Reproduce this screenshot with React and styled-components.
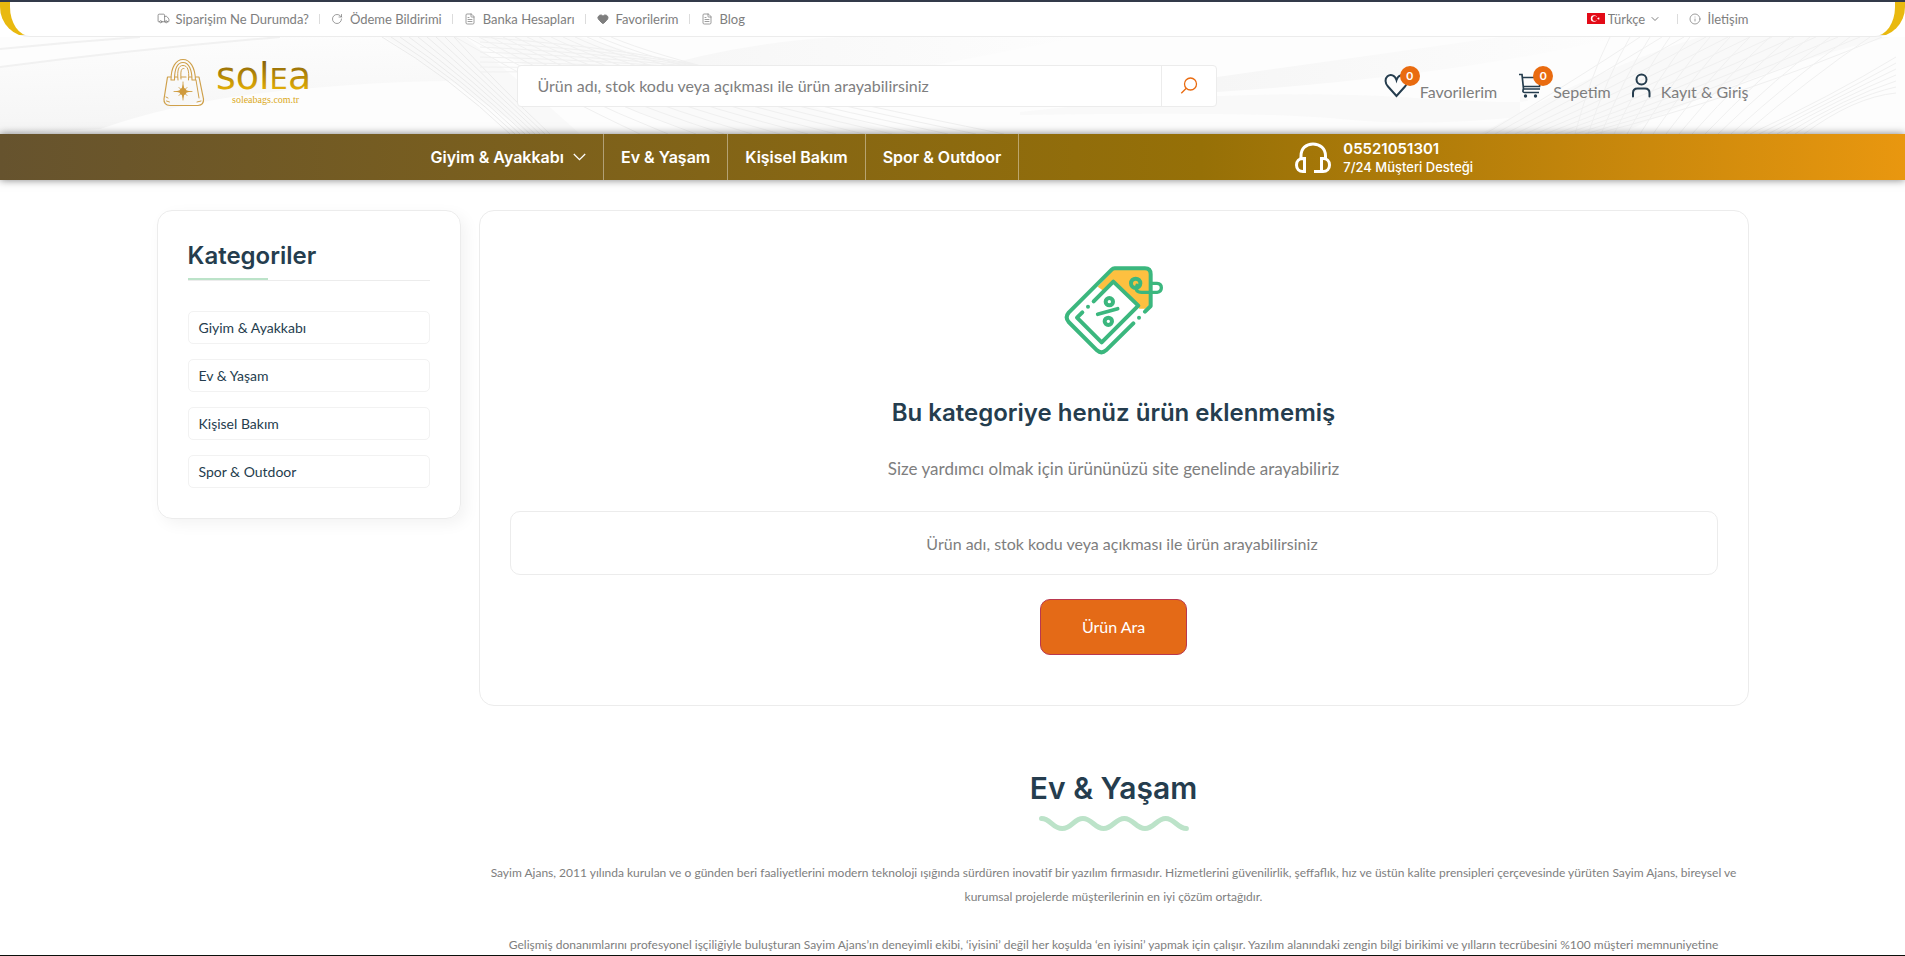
import React from 'react'
import styled, { createGlobalStyle } from 'styled-components'
import { Truck, RotateCw, FileText, Heart, Info, ChevronDown } from 'lucide-react'

const GlobalStyle = createGlobalStyle`
  :root {
    --heading: #253d4e;
    --text: #7e7e7e;
    --border: #ececec;
    --orange: #e96b10;
    --green: #3bb77e;
    --lightGreen: #bce3c9;
  }
  * {
    box-sizing: border-box;
  }
  body {
    margin: 0;
    background: #fff;
    color: var(--text);
    font-family: Lato, 'Liberation Sans', sans-serif;
    font-size: 16px;
    line-height: 24px;
  }
  h1, h2, h3, p, ul {
    margin: 0;
    padding: 0;
  }
  ul {
    list-style: none;
  }
  a {
    color: inherit;
    text-decoration: none;
  }
  button, input, select {
    font: inherit;
  }
`

const searchHint = 'Ürün adı, stok kodu veya açıkması ile ürün arayabilirsiniz'

const categories = ['Giyim & Ayakkabı', 'Ev & Yaşam', 'Kişisel Bakım', 'Spor & Outdoor']

const topLinks = [
  { label: 'Siparişim Ne Durumda?', icon: <Truck size={13} strokeWidth={1.5} /> },
  { label: 'Ödeme Bildirimi', icon: <RotateCw size={12} strokeWidth={1.5} /> },
  { label: 'Banka Hesapları', icon: <FileText size={12} strokeWidth={1.5} /> },
  { label: 'Favorilerim', icon: <Heart size={12} fill="currentColor" /> },
  { label: 'Blog', icon: <FileText size={12} strokeWidth={1.5} /> }
]

function Logo() {
  return (
    <svg width="164" height="60" viewBox="0 0 164 60">
      <defs>
        <linearGradient id="gold" gradientUnits="userSpaceOnUse" x1="0" y1="6" x2="0" y2="34">
          <stop offset="0" stopColor="#8a6508" />
          <stop offset="1" stopColor="#e3ae06" />
        </linearGradient>
      </defs>
      <g fill="none" stroke="#cfa04a" strokeWidth="1.2" strokeLinejoin="round" strokeLinecap="round">
        <path d="M14 21h-3.500L7 43q-.5 6 6 6.500h28q6-.5 5.500-6.500L42 21h-3.500" />
        <path d="M18 21h2.500M24 21h5M32 21h2.500" />
        <path d="M14 24C14 11 19 3.500 26 3.500S38 11 38.500 24h-3.500C35 14 32 6.500 26 6.500s-8.500 7.500-8.500 17.500z" strokeWidth="1.1" />
        <path d="M21 24C20 14 21.500 9.500 26 9.500S32.500 14 31.500 24M24 23C23.500 15 24 12 27 12.500" strokeWidth="1" />
        <path d="M39 24l3 18M9 41l2 1M9.500 45l3 1M40 46l4-1" strokeWidth="1" />
        <path d="M17 35.500h18M26 26v18M22 31.500l8 8M30 31.500l-8 8" strokeWidth="0.9" />
      </g>
      <circle cx="26" cy="35.500" r="3.500" fill="#cf9a3c" />
      <path d="M26 28l1.800 6 6.200 1.500-6.200 1.500-1.800 6-1.800-6-6.200-1.500 6.200-1.500z" fill="#cf9a3c" />
      <text x="59" y="33" fill="url(#gold)" fontFamily="DejaVu Sans, sans-serif" fontSize="38">
        sol<tspan fontSize="29">E</tspan>a
        <tspan x="75" y="47" fill="#dba91c" fontFamily="Liberation Serif, serif" fontSize="10">soleabags.com.tr</tspan>
      </text>
    </svg>
  )
}

function SearchIcon() {
  return (
    <svg width="18" height="18" viewBox="0 0 18 18" fill="none" stroke="#e96b10" strokeWidth="1.300">
      <circle cx="10.500" cy="7" r="6" />
      <path d="M6.300 11.300L1.300 16.300" />
    </svg>
  )
}

function HeartIcon() {
  return (
    <svg width="26" height="26" viewBox="0 0 26 26" fill="none" stroke="#253d4e" strokeWidth="2">
      <path d="M12.500 24L4 14.500C.8 11 .8 6.500 3.500 4.300 6.500 1.800 11 3 12.500 8c1.500-5 6-6.200 9-3.700 2.700 2.200 2.700 6.700-.5 10.200z" />
    </svg>
  )
}

function CartIcon() {
  return (
    <svg width="26" height="26" viewBox="0 0 26 26" fill="none" stroke="#253d4e" strokeWidth="1.700">
      <path d="M2 2.500h3l1.500 14.500h16.500M5.500 5.500h18.500l-1.500 9H6.500" />
      <path d="M6.500 17q-1.500 3.500 1 3.500h14.500" />
      <circle cx="8.500" cy="24" r="1.700" fill="#253d4e" stroke="none" />
      <circle cx="18.500" cy="24" r="1.700" fill="#253d4e" stroke="none" />
    </svg>
  )
}

function UserIcon() {
  return (
    <svg width="20" height="26" viewBox="0 0 20 26" fill="none" stroke="#253d4e" strokeWidth="2" strokeLinecap="round">
      <circle cx="10.500" cy="7.500" r="5" />
      <path d="M2 24.500v-3.500q0-4.500 4.500-4.500h7.500q4.500 0 4.500 4.500v3.500" />
    </svg>
  )
}

function HeadsetIcon() {
  return (
    <svg width="36" height="32" viewBox="0 0 36 32" fill="none" stroke="#fff" strokeWidth="3">
      <path d="M6 17.500V14C6 6.500 11 2 18 2s12.500 4.500 12.500 12v3.500" />
      <path d="M9.500 16.500v13H8C4 29.500 1.500 27 1.500 23s2.500-6.500 6.500-6.500z" />
      <path d="M26.500 29.500v-13H28c4 0 6.500 2.500 6.500 6.500s-2.500 6.500-6.500 6.500h-9" />
    </svg>
  )
}

function TurkishFlag() {
  return (
    <svg width="18" height="11" viewBox="0 0 18 11">
      <rect width="18" height="11" fill="#e30a17" />
      <circle cx="7" cy="5.500" r="3.200" fill="#fff" />
      <circle cx="7.900" cy="5.500" r="2.500" fill="#e30a17" />
      <path d="M10 5.500l1-.4.1-1 .7.800 1-.3-.6.900.6.900-1-.3-.7.800-.1-1z" fill="#fff" />
    </svg>
  )
}

function TagIcon() {
  return (
    <svg width="100" height="90" viewBox="190 75 300 270" fill="none" strokeLinecap="round" strokeLinejoin="round">
      <path d="M340 86h95q15 0 15 14v92l-16 14h-18l-78-84-30 30-17-12z" fill="#fdc040" />
      <g stroke="#3bb77e" strokeWidth="12">
        <path d="M433 215l17-17v-95q0-18-17-18h-91q-5 0-9 4L204 218q-12 14 0 28l85 85q13 12 27 0l82-81" />
        <path d="M279 184l59-59 75 72-110 110-74-74 16-16" />
        <circle cx="326" cy="185" r="11" />
        <circle cx="323" cy="244" r="11" />
        <path d="M291 223l60-17" strokeWidth="11" />
        <circle cx="405" cy="130" r="14" />
        <path d="M409 136q-8 21 14 21h46q13-2 13-14t-13-13h-17" strokeWidth="10" />
      </g>
      <circle cx="262" cy="200" r="6" fill="#3bb77e" />
      <circle cx="415" cy="233" r="6" fill="#3bb77e" />
    </svg>
  )
}

function Wave() {
  return (
    <svg width="150" height="15" viewBox="0 0 150 15" fill="none" stroke="#bce3c9" strokeWidth="5" strokeLinecap="round">
      <path d="M2.500 2.500c9 0 11 10 20.700 10s11.700-10 20.700-10 11.700 10 20.700 10 11.700-10 20.700-10 11.700 10 20.700 10 11.700-10 20.700-10 11.700 10 20.700 10" />
    </svg>
  )
}

const range = n => Array.from({ length: n }, (_, i) => i)

// soft folds and thin threads behind the header
function HeaderPattern() {
  return (
    <Pattern viewBox="0 0 1905 97" preserveAspectRatio="none" fill="none">
      <defs>
        <linearGradient id="fold" x1="0" y1="0" x2="0.1" y2="1">
          <stop offset="0" stopColor="#fdfdfd" />
          <stop offset="1" stopColor="#f5f5f5" />
        </linearGradient>
        <linearGradient id="ridge" x1="0" y1="0" x2="1" y2="0">
          <stop offset="0" stopColor="#f6f6f6" />
          <stop offset="1" stopColor="#fdfdfd" />
        </linearGradient>
      </defs>
      <rect width="1905" height="97" fill="#fdfdfd" />
      <path d="M0 30Q140 10 280 0H400L450 44Q380 44 280 54T100 92L0 97z" fill="url(#fold)" />
      <path d="M385 0h80Q540 60 580 97H530Q460 50 385 0z" fill="#f9f9f9" />
      <path d="M470 0h110Q720 40 900 97H700Q560 50 470 0z" fill="#fafafa" />
      <path d="M640 35Q740 5 840 0h240L900 35z" fill="url(#ridge)" />
      <path d="M1217 40Q1360 20 1500 0h120Q1450 40 1217 55z" fill="url(#ridge)" />
      <path d="M1020 75Q1240 50 1400 60t120 0v20Q1420 90 1340 82T1020 78z" fill="#f9f9f9" />
      <path d="M1480 97Q1600 30 1700 0h190Q1760 30 1620 97z" fill="#f9f9f9" />
      <g stroke="#f1f1f1" strokeWidth="2">
        <path d="M0 12Q70 5 140 0" />
        <path d="M0 30Q140 12 280 0" />
      </g>
      <g stroke="#ebebeb">
        {range(9).map(i => (
          <path key={i} d={`M${382 + i * 9} 0Q${450 + i * 6} ${40 + i} ${510 + i * 5} 97`} />
        ))}
      </g>
      <g stroke="#f0f0f0">
        {range(14).map(i => (
          <path key={i} d={`M${455 + i * 12} 0Q${560 + i * 10} ${60 - i * 2} ${640 + i * 28} 97`} />
        ))}
        {range(8).map(i => (
          <path key={i} d={`M480 ${i * 5}Q640 ${12 + i * 3} ${720 + i * 10} ${34 + i}`} />
        ))}
        {range(12).map(i => (
          <path key={i} d={`M${1485 + i * 10} 97Q${1580 + i * 14} ${40 + i * 2} ${1640 + i * 22} 0`} />
        ))}
        {range(14).map(i => (
          <path key={i} d={`M${1610 + i * 20} 0Q${1590 + i * 17} 40 ${1575 + i * 13} 97`} />
        ))}
        {range(7).map(i => (
          <path key={i} d={`M${1750 + i * 9} 97Q${1830 + i * 4} 60 1896 ${20 + i * 6}`} />
        ))}
      </g>
    </Pattern>
  )
}

export default function App() {
  return (
    <Page>
      <GlobalStyle />
      <TopBar>
        <TopInner>
          <TopList>
            {topLinks.map(link => (
              <TopItem key={link.label}>
                <TopLink href="#">
                  <TopIcon>{link.icon}</TopIcon>
                  {link.label}
                </TopLink>
              </TopItem>
            ))}
          </TopList>
          <TopList>
            <TopItem>
              <Language>
                <TurkishFlag />
                <LanguageSelect aria-label="Dil">
                  <option>Türkçe</option>
                </LanguageSelect>
                <ChevronDown size={12} strokeWidth={2} />
              </Language>
            </TopItem>
            <TopItem>
              <TopLink href="#">
                <TopIcon><Info size={12} strokeWidth={1.5} /></TopIcon>
                İletişim
              </TopLink>
            </TopItem>
          </TopList>
        </TopInner>
      </TopBar>

      <Header>
        <HeaderPattern />
        <HeaderInner>
          <LogoLink href="#" aria-label="solea"><Logo /></LogoLink>
          <SearchForm>
            <SearchInput type="text" placeholder={searchHint} aria-label="Ürün ara" />
            <SearchButton type="button" aria-label="Ara"><SearchIcon /></SearchButton>
          </SearchForm>
          <Actions>
            <Action href="#">
              <ActionIcon><HeartIcon /><Badge>0</Badge></ActionIcon>
              <ActionLabel>Favorilerim</ActionLabel>
            </Action>
            <Action href="#">
              <ActionIcon><CartIcon /><Badge>0</Badge></ActionIcon>
              <ActionLabel>Sepetim</ActionLabel>
            </Action>
            <Action href="#">
              <ActionIcon><UserIcon /></ActionIcon>
              <ActionLabel>Kayıt & Giriş</ActionLabel>
            </Action>
          </Actions>
        </HeaderInner>
      </Header>

      <Navbar>
        <NavInner>
          <Menu>
            {categories.map((name, i) => (
              <MenuItem key={name}>
                <a href="#">{name}</a>
                {i === 0 && (
                  <svg width="13" height="8" viewBox="0 0 13 8" fill="none" stroke="#fff" strokeWidth="1.300">
                    <path d="M.8 1l5.700 5.700L12.200 1" />
                  </svg>
                )}
              </MenuItem>
            ))}
          </Menu>
          <Support>
            <HeadsetIcon />
            <div>
              <Phone href="tel:05521051301">05521051301</Phone>
              <SupportNote>7/24 Müşteri Desteği</SupportNote>
            </div>
          </Support>
        </NavInner>
      </Navbar>

      <Content>
        <Sidebar>
          <SidebarTitle>Kategoriler</SidebarTitle>
          <CategoryList>
            {categories.map(name => (
              <li key={name}><CategoryLink href="#">{name}</CategoryLink></li>
            ))}
          </CategoryList>
        </Sidebar>
        <Main>
          <EmptyCard>
            <TagIcon />
            <EmptyTitle>Bu kategoriye henüz ürün eklenmemiş</EmptyTitle>
            <EmptyText>Size yardımcı olmak için ürününüzü site genelinde arayabiliriz</EmptyText>
            <EmptyInput type="text" placeholder={searchHint} aria-label="Site genelinde ürün ara" />
            <EmptyButton type="button">Ürün Ara</EmptyButton>
          </EmptyCard>
          <About>
            <AboutTitle>Ev & Yaşam</AboutTitle>
            <Wave />
            <AboutText>
              <p>
                Sayim Ajans, 2011 yılında kurulan ve o günden beri faaliyetlerini modern teknoloji ışığında sürdüren inovatif bir yazılım firmasıdır. Hizmetlerini güvenilirlik, şeffaflık, hız ve üstün kalite prensipleri çerçevesinde yürüten Sayim Ajans, bireysel ve kurumsal projelerde müşterilerinin en iyi çözüm ortağıdır.
              </p>
              <p>
                Gelişmiş donanımlarını profesyonel işçiliğiyle buluşturan Sayim Ajans’ın deneyimli ekibi, ‘iyisini’ değil her koşulda ‘en iyisini’ yapmak için çalışır. Yazılım alanındaki zengin bilgi birikimi ve yılların tecrübesini %100 müşteri memnuniyetine
              </p>
            </AboutText>
          </About>
        </Main>
      </Content>
    </Page>
  )
}

const Page = styled.div`
  height: 100vh;
  overflow: hidden;
  border-top: 2px solid #323a4a;
  border-bottom: 1px solid #0b0f0b;
`

const Container = styled.div`
  width: calc(100% - 24px);
  max-width: 1592px;
  margin: 0 auto;
`

const TopBar = styled.div`
  border: solid #e9b90f;
  border-width: 0 10px 1px;
  border-bottom-color: var(--border);
  border-radius: 0 0 30px 30px;
  font-size: 13px;
`

const TopInner = styled(Container)`
  display: flex;
  justify-content: space-between;
  align-items: center;
  height: 34px;
  padding-bottom: 1px;
`

const TopList = styled.ul`
  display: flex;
`

const TopItem = styled.li`
  display: flex;
  align-items: center;
  & + &::before {
    content: '';
    width: 1px;
    height: 10px;
    margin: 0 11px 0 10px;
    background: #dcdcdc;
  }
`

const TopLink = styled.a`
  display: flex;
  align-items: center;
  gap: 6px;
`

const TopIcon = styled.span`
  display: flex;
  width: 13px;
`

const Language = styled.div`
  display: flex;
  align-items: center;
  gap: 3px;
  margin-right: 6px;
`

const LanguageSelect = styled.select`
  appearance: none;
  border: 0;
  padding: 0;
  background: none;
  color: inherit;
`

const Header = styled.header`
  position: relative;
`

const Pattern = styled.svg`
  position: absolute;
  inset: 0;
  width: 100%;
  height: 100%;
`

const HeaderInner = styled(Container)`
  position: relative;
  display: flex;
  align-items: center;
  height: 97px;
`

const LogoLink = styled.a`
  display: flex;
  flex: 0 1 360px;
`

const SearchForm = styled.form`
  display: flex;
  flex: 0 1 700px;
  height: 42px;
  background: #fff;
  border: 1px solid var(--border);
  border-radius: 4px;
`

const SearchInput = styled.input`
  flex: 1;
  min-width: 0;
  padding: 0 20px;
  border: 0;
  background: none;
  outline: 0;
  &::placeholder {
    color: var(--text);
  }
`

const SearchButton = styled.button`
  display: flex;
  align-items: center;
  justify-content: center;
  width: 55px;
  padding: 0;
  border: 0;
  border-left: 1px solid var(--border);
  background: none;
`

const Actions = styled.div`
  display: flex;
  gap: 20px;
  margin: 5px 0 0 auto;
`

const Action = styled.a`
  display: flex;
  gap: 10px;
  height: 32px;
`

const ActionIcon = styled.span`
  position: relative;
  display: flex;
`

const Badge = styled.span`
  position: absolute;
  top: -6px;
  right: -10px;
  width: 20px;
  height: 20px;
  border-radius: 50%;
  background: var(--orange);
  color: #fff;
  font-size: 12px;
  font-weight: 700;
  line-height: 20px;
  text-align: center;
`

const ActionLabel = styled.span`
  align-self: flex-end;
`

const Navbar = styled.nav`
  position: relative;
  background: linear-gradient(to right, #66532e 0%, #967007 63%, #e9970f 100%);
  box-shadow: 0 0 8px rgba(0, 0, 0, 0.5);
  color: #fff;
  font-family: Inter, sans-serif;
  font-weight: 600;
`

const NavInner = styled(Container)`
  display: flex;
  align-items: center;
  padding-left: 257px;
`

const Menu = styled.ul`
  display: flex;
`

const MenuItem = styled.li`
  display: flex;
  align-items: center;
  gap: 9px;
  height: 46px;
  padding: 0 17px;
  border-right: 1px solid rgba(255, 255, 255, 0.4);
`

const Support = styled.div`
  display: flex;
  align-items: center;
  gap: 12px;
  margin-left: 276px;
  padding-top: 2px;
`

const Phone = styled.a`
  display: block;
  font-size: 15px;
  line-height: 18px;
`

const SupportNote = styled.div`
  font-size: 13px;
  font-weight: 500;
  line-height: 18px;
`

const Content = styled(Container)`
  display: flex;
  align-items: flex-start;
  gap: 18px;
  padding-top: 30px;
`

const Sidebar = styled.aside`
  flex: 0 0 304px;
  padding: 30px;
  border: 1px solid var(--border);
  border-radius: 15px;
  box-shadow: 5px 5px 15px rgba(0, 0, 0, 0.05);
`

const Title = styled.h2`
  color: var(--heading);
  font-family: Inter, sans-serif;
  font-size: 24px;
  font-weight: 600;
  line-height: 29px;
`

const SidebarTitle = styled(Title)`
  position: relative;
  margin-bottom: 30px;
  padding-bottom: 10px;
  border-bottom: 1px solid var(--border);
  &::after {
    content: '';
    position: absolute;
    left: 0;
    bottom: 0;
    width: 80px;
    height: 2px;
    background: var(--lightGreen);
  }
`

const CategoryList = styled.ul`
  display: grid;
  gap: 15px;
`

const CategoryLink = styled.a`
  display: block;
  padding: 0 10px;
  border: 1px solid #f2f2f2;
  border-radius: 5px;
  color: var(--heading);
  font-size: 14px;
  line-height: 31px;
`

const Main = styled.main`
  flex: 1;
  min-width: 0;
`

const EmptyCard = styled.section`
  display: flex;
  flex-direction: column;
  align-items: center;
  padding: 54px 30px 50px;
  border: 1px solid var(--border);
  border-radius: 15px;
`

const EmptyTitle = styled(Title)`
  margin-top: 43px;
`

const EmptyText = styled.p`
  margin: 30px 0;
  font-size: 17px;
`

const EmptyInput = styled.input`
  width: 100%;
  height: 64px;
  padding: 0 0 0 17px;
  border: 1px solid var(--border);
  border-radius: 10px;
  background: #fff;
  text-align: center;
  outline: 0;
  &::placeholder {
    color: var(--text);
  }
`

const EmptyButton = styled.button`
  height: 56px;
  margin-top: 24px;
  padding: 0 41px;
  border: 1px solid #b9384f;
  border-radius: 10px;
  background: #e46a17;
  color: #fff;
`

const About = styled.section`
  display: flex;
  flex-direction: column;
  align-items: center;
  padding-top: 64px;
`

const AboutTitle = styled(Title)`
  margin-bottom: 10px;
  font-size: 30px;
  line-height: 36px;
`

const AboutText = styled.div`
  display: grid;
  gap: 24px;
  margin-top: 30px;
  font-size: 12px;
  text-align: center;
`
